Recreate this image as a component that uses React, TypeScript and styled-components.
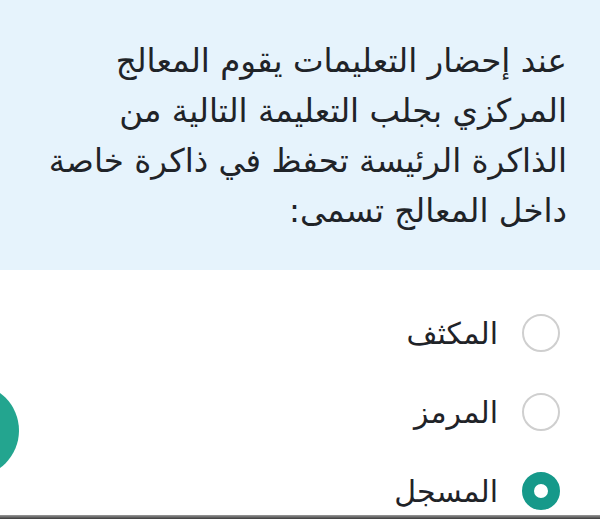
import React from "react";
import styled, { createGlobalStyle } from "styled-components";

const Global = createGlobalStyle`
  html, body { margin: 0; padding: 0; background: #fff; }
  body { font-family: "DejaVu Sans", "Noto Sans", sans-serif; }
`;

const Screen = styled.div`
  position: relative;
  width: 600px;
  height: 520px;
  overflow: hidden;
  background: #fff;
  direction: rtl;
`;

const QuestionPanel = styled.div`
  background: #e6f3fc;
  padding: 36px 33px 35px 20px;
  height: 270px;
  box-sizing: border-box;
`;

const QuestionLine = styled.div`
  font-size: 32.5px;
  line-height: 50px;
  color: #1f2328;
  white-space: nowrap;
`;

const Options = styled.div`
  display: flex;
  flex-direction: column;
  gap: 41px;
  padding: 44px 40px 0 0;
`;

const Option = styled.div`
  display: flex;
  align-items: center;
  gap: 24px;
  height: 38px;
`;

const Radio = styled.span<{ $checked?: boolean }>`
  width: 38px;
  height: 38px;
  box-sizing: border-box;
  border-radius: 50%;
  border: ${(p) => (p.$checked ? "12px solid #16998a" : "2.5px solid #cfcfcf")};
  background: #fff;
  flex-shrink: 0;
`;

const Label = styled.span`
  font-size: 30px;
  color: #1f2328;
`;

const SideBlob = styled.div`
  position: absolute;
  left: -74px;
  top: 384px;
  width: 93px;
  height: 93px;
  border-radius: 50%;
  background: #23a58f;
`;

const BottomBar = styled.div`
  position: absolute;
  left: 0;
  right: 0;
  bottom: 1px;
  height: 4px;
  background: linear-gradient(#9a9a9a, #3a3a3a);
`;

const lines = [
  "عند إحضار التعليمات يقوم المعالج",
  "المركزي بجلب التعليمة التالية من",
  "الذاكرة الرئيسة تحفظ في ذاكرة خاصة",
  "داخل المعالج تسمى:",
];

const answers = [
  { text: "المكثف", checked: false },
  { text: "المرمز", checked: false },
  { text: "المسجل", checked: true },
];

export default function App() {
  return (
    <Screen>
      <Global />
      <QuestionPanel>
        {lines.map((l, i) => (
          <QuestionLine key={i}>{l}</QuestionLine>
        ))}
      </QuestionPanel>
      <Options>
        {answers.map((a, i) => (
          <Option key={i}>
            <Radio $checked={a.checked} />
            <Label>{a.text}</Label>
          </Option>
        ))}
      </Options>
      <SideBlob />
      <BottomBar />
    </Screen>
  );
}
